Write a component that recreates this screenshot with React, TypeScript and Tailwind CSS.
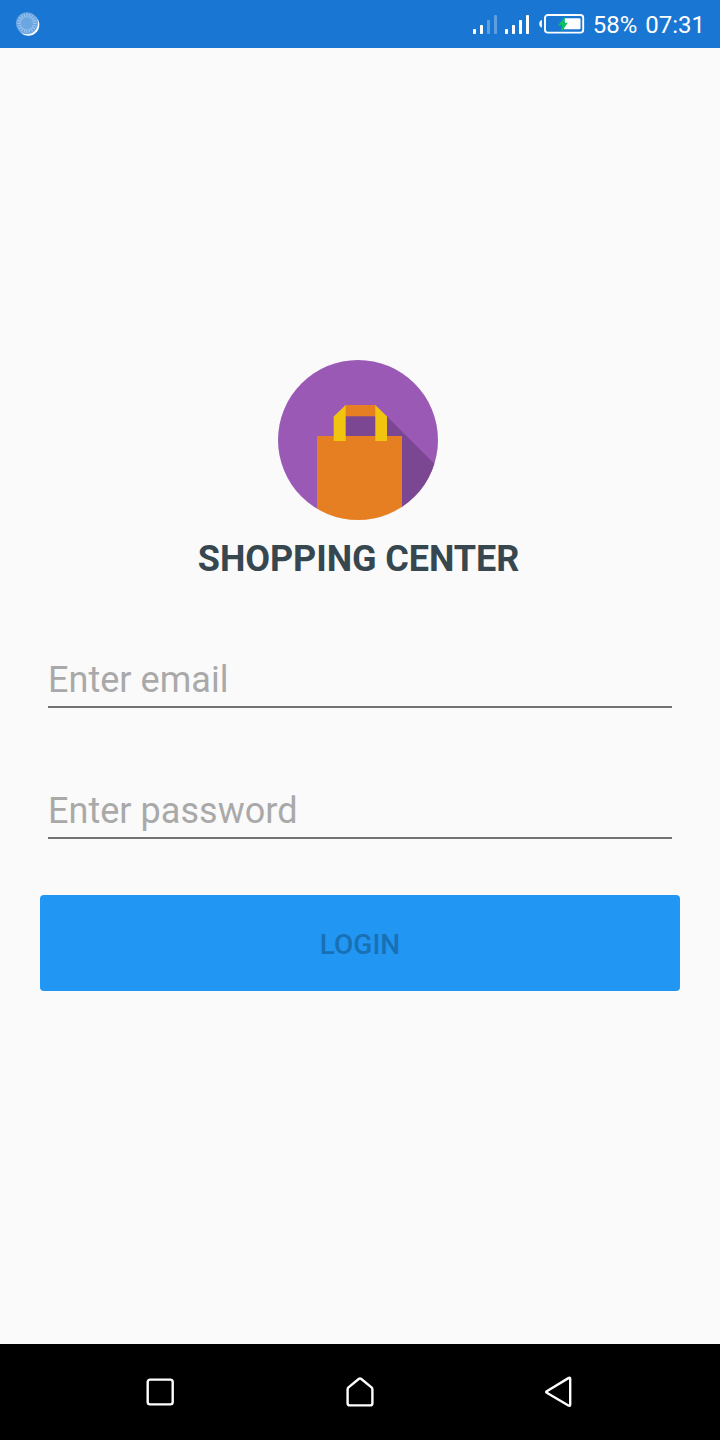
import React from "react";

const TICKS = Array.from({ length: 20 }, (_, i) => i * 18);

function SyncIcon() {
  return (
    <svg width="48" height="48" viewBox="0 0 48 48" fill="none">
      <circle cx="28.4" cy="24.9" r="10.9" fill="#fff" />
      <circle cx="27" cy="23.3" r="11" fill="#6ba6e3" />
      {TICKS.map((a) => (
        <path key={a} d="M27 13.4v4" stroke="#a3c8ee" strokeWidth="1" transform={`rotate(${a} 27 23.3)`} />
      ))}
    </svg>
  );
}

function SignalIcon({ weak = false }: { weak?: boolean }) {
  const faded = weak ? 0.3 : 1;
  return (
    <svg width="24" height="20" viewBox="0 0 24 20" fill="#fff">
      <rect x="0" y="15" width="3" height="5" rx=".7" />
      <rect x="7" y="11" width="3" height="9" rx=".7" />
      <rect x="14" y="6" width="3" height="14" rx=".7" opacity={faded} />
      <rect x="21" y="1" width="3" height="19" rx=".7" opacity={faded} />
    </svg>
  );
}

function BatteryIcon() {
  return (
    <svg width="46" height="20" viewBox="0 0 46 20" fill="none">
      <path d="M2.9 6v7.6C-.6 13.2-.6 6.4 2.9 6Z" fill="#fff" />
      <rect x="6" y="1" width="38.2" height="17.6" rx="2.8" stroke="#fff" strokeWidth="1.9" />
      <path d="M25 4.3h15.5q1 0 1 1v9q0 1-1 1H24.5L26 9Z" fill="#fff" />
      <path d="M26.3 2.5 18.9 11.2h3.9L22 18.8 28.8 8.8h-3.6Z" fill="#0cc25c" />
    </svg>
  );
}

function ShoppingLogo() {
  return (
    <svg width="160" height="160" viewBox="0 0 160 160">
      <defs>
        <clipPath id="disc">
          <circle cx="80" cy="80" r="80" />
        </clipPath>
      </defs>
      <g clipPath="url(#disc)">
        <path d="M0 0H160V160H124V76H39V160H0Z" fill="#9b59b6" />
        <path d="M67 56H108.5L160 107.5V160H123V77H67Z" fill="#7c4792" />
        <rect x="39" y="76" width="85" height="84" fill="#e67e22" />
        <rect x="67" y="45" width="31" height="11.3" fill="#e67e22" />
        <path d="M67.7 45v36H55.7V56.5Z" fill="#f1c40f" />
        <path d="M97.3 45v36H109V56.5Z" fill="#f1c40f" />
      </g>
    </svg>
  );
}

function Field({ type, placeholder }: { type: string; placeholder: string }) {
  return (
    <input
      type={type}
      placeholder={placeholder}
      className="block h-14 w-full border-b-2 border-[#727272] bg-transparent pt-[2px] text-4xl leading-[42px] tracking-[0.04px] text-[#212121] outline-none placeholder:text-[#a9a9a9]"
    />
  );
}

export default function App() {
  return (
    <div className="flex h-[1440px] w-[720px] flex-col overflow-hidden bg-[#fafafa] font-['Roboto',sans-serif]">
      <header className="flex h-12 shrink-0 items-center justify-between bg-[#1976d2] pr-[15px] text-white">
        <SyncIcon />
        <div className="flex items-center">
          <div className="flex items-center gap-2">
            <SignalIcon weak />
            <SignalIcon />
          </div>
          <div className="ml-[10px] flex pb-px">
            <BatteryIcon />
          </div>
          <span className="ml-2 pt-[2px] text-2xl leading-7">58%</span>
          <span className="ml-2 pt-[2px] text-2xl leading-7">07:31</span>
        </div>
      </header>

      <main className="flex flex-1 flex-col items-center px-10 pt-[312px]">
        <div className="flex flex-col items-center pr-1">
          <ShoppingLogo />
          <h1 className="mt-[17px] pl-px text-4xl leading-[44px] font-bold tracking-[-0.08px] whitespace-nowrap text-[#37474f]">SHOPPING CENTER</h1>
        </div>
        <form className="mt-[71px] flex w-full flex-col" onSubmit={(e) => e.preventDefault()}>
          <div className="flex flex-col gap-[75px] px-2">
            <Field type="email" placeholder="Enter email" />
            <Field type="password" placeholder="Enter password" />
          </div>
          <button type="submit" className="mt-14 h-24 w-full rounded-[4px] bg-[#2196f3] pt-1 text-[28px] font-medium text-[#1a70b5]">
            LOGIN
          </button>
        </form>
      </main>

      <nav className="flex h-24 shrink-0 items-center justify-center gap-[152px] bg-black">
        <svg width="48" height="48" viewBox="0 0 48 48" fill="none" stroke="#fff" strokeWidth="2.4" strokeLinejoin="round">
          <rect x="11.7" y="11.6" width="25" height="24.8" rx="2.4" />
        </svg>
        <svg width="48" height="48" viewBox="0 0 48 48" fill="none" stroke="#fff" strokeWidth="2.4" strokeLinejoin="round">
          <path d="M23 10.8q1-.8 2 0L35.5 19.4q.9.8.9 2V35.2q0 2.2-2.2 2.2H13.8q-2.2 0-2.2-2.2V21.4q0-1.2.9-2Z" />
        </svg>
        <svg width="48" height="48" viewBox="0 0 48 48" fill="none" stroke="#fff" strokeWidth="2.4" strokeLinejoin="round">
          <path d="M10.8 23.2 32.4 10.1q1.8-1 1.8 1V36.5q0 2-1.8 1L10.8 24.8q-1.3-.8 0-1.6Z" />
        </svg>
      </nav>
    </div>
  );
}
